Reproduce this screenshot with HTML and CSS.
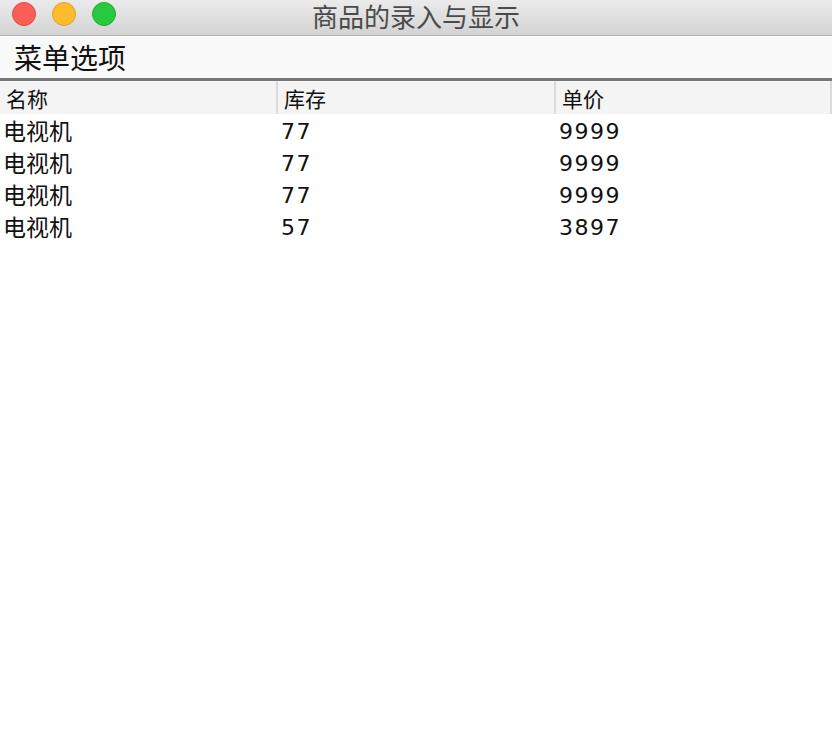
FILE: index.html
```html
<!DOCTYPE html>
<html lang="zh">
<head>
    <meta charset="UTF-8">
    <title>商品的录入与显示</title>
    <link rel="stylesheet" href="styles.css">
</head>
<body>
    <div class="window">
        <div class="titlebar">
            <div class="lights">
                <span class="light close"></span>
                <span class="light min"></span>
                <span class="light max"></span>
            </div>
            <div class="title">商品的录入与显示</div>
        </div>

        <div class="menubar">
            <span class="menu">菜单选项</span>
        </div>

        <table class="goods">
            <thead>
                <tr>
                    <th>名称</th>
                    <th>库存</th>
                    <th>单价</th>
                </tr>
            </thead>
            <tbody>
                <tr><td>电视机</td><td>77</td><td>9999</td></tr>
                <tr><td>电视机</td><td>77</td><td>9999</td></tr>
                <tr><td>电视机</td><td>77</td><td>9999</td></tr>
                <tr><td>电视机</td><td>57</td><td>3897</td></tr>
            </tbody>
        </table>
    </div>
</body>
</html>
```

FILE: styles.css
```css
* {
    margin: 0;
    padding: 0;
    box-sizing: border-box;
}

body {
    font-family: 'DejaVu Sans', 'Noto Sans CJK SC', sans-serif;
    background: #ffffff;
    width: 832px;
    height: 742px;
    overflow: hidden;
}

.window {
    width: 832px;
    height: 742px;
    background: #ffffff;
}

.titlebar {
    position: relative;
    height: 36px;
    background: linear-gradient(#ebebeb, #d3d3d3);
    border-bottom: 1px solid #b4b4b4;
    display: flex;
    align-items: flex-start;
    justify-content: center;
}

.lights {
    position: absolute;
    left: 12px;
    top: 2px;
    display: flex;
    gap: 16px;
}

.light {
    width: 24px;
    height: 24px;
    border-radius: 50%;
}

.light.close {
    background: #fc5f57;
    border: 1px solid #e2463f;
}

.light.min {
    background: #fdbc2e;
    border: 1px solid #e1a123;
}

.light.max {
    background: #28c840;
    border: 1px solid #1dad2b;
}

.title {
    font-family: 'Noto Sans CJK SC', sans-serif;
    font-size: 26px;
    line-height: 30px;
    padding-top: 1px;
    color: #4a4a4a;
}

.menubar {
    height: 45px;
    background: #f9f9f9;
    border-bottom: 3px solid #777777;
    display: flex;
    align-items: center;
    padding-left: 14px;
}

.menu {
    font-family: 'Noto Sans CJK SC', sans-serif;
    font-size: 28px;
    line-height: 34px;
    color: #111;
}

.goods {
    width: 832px;
    border-collapse: collapse;
    table-layout: fixed;
}

.goods th {
    height: 32px;
    background: #f4f4f4;
    font-family: 'Noto Sans CJK SC', sans-serif;
    font-weight: normal;
    font-size: 21px;
    line-height: 26px;
    color: #111;
    text-align: left;
    padding-left: 6px;
    border-right: 2px solid #dadada;
    border-top: 1px solid #fafafa;
}

.goods th:first-child {
    width: 277px;
}

.goods th:nth-child(2) {
    width: 278px;
}

.goods td {
    height: 32px;
    font-size: 22px;
    line-height: 26px;
    color: #111;
    padding-left: 4px;
    padding-top: 4px;
    letter-spacing: 1.5px;
}

.goods td:first-child {
    font-family: 'Noto Sans CJK SC', sans-serif;
    font-size: 23px;
    letter-spacing: 0;
    padding-left: 3px;
    padding-top: 0;
}
```
